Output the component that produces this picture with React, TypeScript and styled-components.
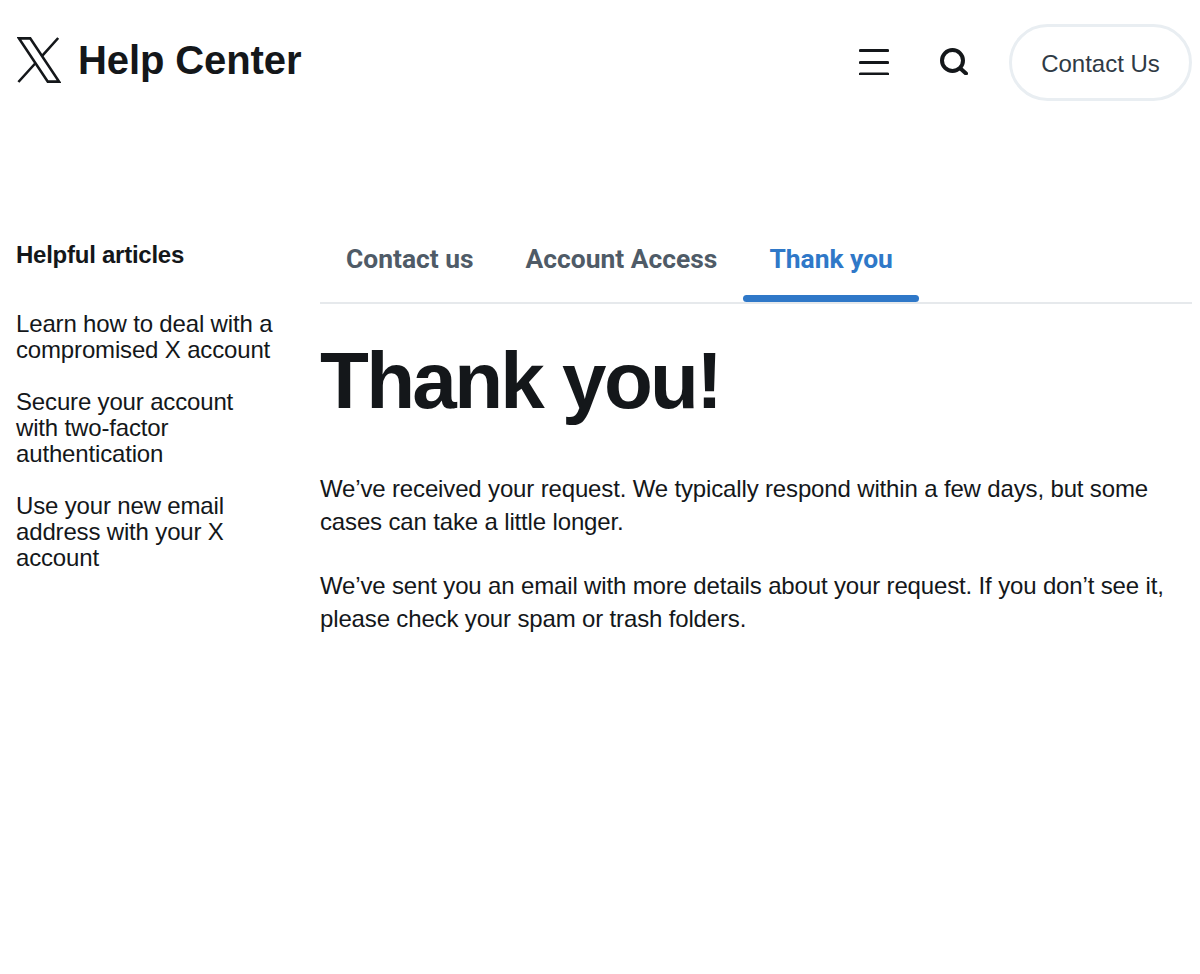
import { createGlobalStyle } from 'styled-components'
import styled from 'styled-components'

const GlobalStyle = createGlobalStyle`
    html, body {
        margin: 0;
        padding: 0;
        background: #fff;
        font-family: "Liberation Sans", Arial, sans-serif;
    }
`

const articles = [
    'Learn how to deal with a compromised X account',
    'Secure your account with two-factor authentication',
    'Use your new email address with your X account',
]

const tabs = ['Contact us', 'Account Access', 'Thank you']

const App = () => {
    return (
        <Page>
            <GlobalStyle />
            <Header>
                <Brand>
                    <svg width="44" height="46" viewBox="0 0 44 46" fill="none" stroke="#14171a" strokeWidth="2.6">
                        <path d="M2 1.4h11.2L42 44.6H30.8z" />
                        <path d="M41.2 1 25.4 18.6M1.4 45l17.2-19" />
                    </svg>
                    <BrandName>Help Center</BrandName>
                </Brand>
                <Actions>
                    <IconButton>
                        <svg width="30" height="28" viewBox="0 0 30 28" fill="none" stroke="#14171a" strokeWidth="3.2" strokeLinecap="round">
                            <path d="M1.5 3.5h27M1.5 15.5h27M1.5 27h27" />
                        </svg>
                    </IconButton>
                    <IconButton>
                        <svg width="28" height="28" viewBox="0 0 28 28" fill="none" stroke="#14171a" strokeWidth="4" strokeLinecap="round">
                            <circle cx="12.5" cy="13.5" r="10.5" />
                            <path d="M21 22 26 26.5" />
                        </svg>
                    </IconButton>
                    <ContactButton>Contact Us</ContactButton>
                </Actions>
            </Header>
            <Body>
                <Sidebar>
                    <SidebarTitle>Helpful articles</SidebarTitle>
                    <ArticleList>
                        {articles.map((a) => (
                            <Article key={a}>{a}</Article>
                        ))}
                    </ArticleList>
                </Sidebar>
                <Main>
                    <Tabs>
                        {tabs.map((t) => (
                            <Tab key={t} active={t === 'Thank you'}>{t}</Tab>
                        ))}
                    </Tabs>
                    <Title>Thank you!</Title>
                    <Paragraph>We’ve received your request. We typically respond within a few days, but some cases can take a little longer.</Paragraph>
                    <Paragraph>We’ve sent you an email with more details about your request. If you don’t see it, please check your spam or trash folders.</Paragraph>
                </Main>
            </Body>
        </Page>
    )
}

export default App

const Page = styled.div`
    width: 1200px;
    height: 974px;
    box-sizing: border-box;
    padding: 0 8px 0 16px;
    overflow: hidden;
    color: #14171a;
`

const Header = styled.header`
    display: flex;
    justify-content: space-between;
    align-items: flex-start;
    height: 124px;
`

const Brand = styled.div`
    display: flex;
    align-items: center;
    gap: 17px;
    margin-top: 37px;
    padding-left: 1px;
`

const BrandName = styled.div`
    font-size: 40px;
    font-weight: 700;
    line-height: 46px;
    letter-spacing: -0.1px;
`

const Actions = styled.div`
    display: flex;
    align-items: center;
    margin-top: 24px;
`

const IconButton = styled.div`
    display: flex;
    align-items: center;
    justify-content: center;
    width: 80px;
    margin-top: -4px;
`

const ContactButton = styled.div`
    box-sizing: border-box;
    width: 183px;
    height: 77px;
    margin-left: 15px;
    padding-top: 2px;
    display: flex;
    align-items: center;
    justify-content: center;
    border: 3px solid #e9eef2;
    border-radius: 39px;
    color: #2f3a45;
    font-size: 24px;
`

const Body = styled.div`
    display: flex;
    padding-top: 108px;
`

const Sidebar = styled.aside`
    width: 304px;
    flex-shrink: 0;
    padding-top: 8px;
`

const SidebarTitle = styled.div`
    font-size: 24px;
    font-weight: 700;
    line-height: 30px;
    letter-spacing: -0.25px;
`

const ArticleList = styled.div`
    display: flex;
    flex-direction: column;
    gap: 26px;
    margin-top: 41px;
    width: 262px;
`

const Article = styled.div`
    font-size: 24px;
    line-height: 26px;
    letter-spacing: -0.16px;
`

const Main = styled.main`
    flex: 1;
`

const Tabs = styled.div`
    display: flex;
    border-bottom: 2px solid #e6e9ec;
    height: 70px;
`

const Tab = styled.div<{ active?: boolean }>`
    position: relative;
    padding: 11px 26px 0;
    font-family: Roboto, "Liberation Sans", sans-serif;
    font-size: 26.4px;
    font-weight: 700;
    line-height: 32px;
    color: ${(p) => (p.active ? '#2f78c8' : '#4f5b67')};

    &::after {
        content: '';
        display: ${(p) => (p.active ? 'block' : 'none')};
        position: absolute;
        left: 0;
        right: 0;
        bottom: 0;
        height: 7px;
        border-radius: 4px;
        background: #2f78c8;
    }
`

const Title = styled.h1`
    margin: 37px 0 51px;
    font-size: 80px;
    font-weight: 700;
    line-height: 80px;
    letter-spacing: -2.7px;
    word-spacing: 0.5px;
`

const Paragraph = styled.p`
    margin: 0 0 31px;
    font-size: 24px;
    line-height: 33px;
    letter-spacing: -0.15px;
    color: #14171a;
`
